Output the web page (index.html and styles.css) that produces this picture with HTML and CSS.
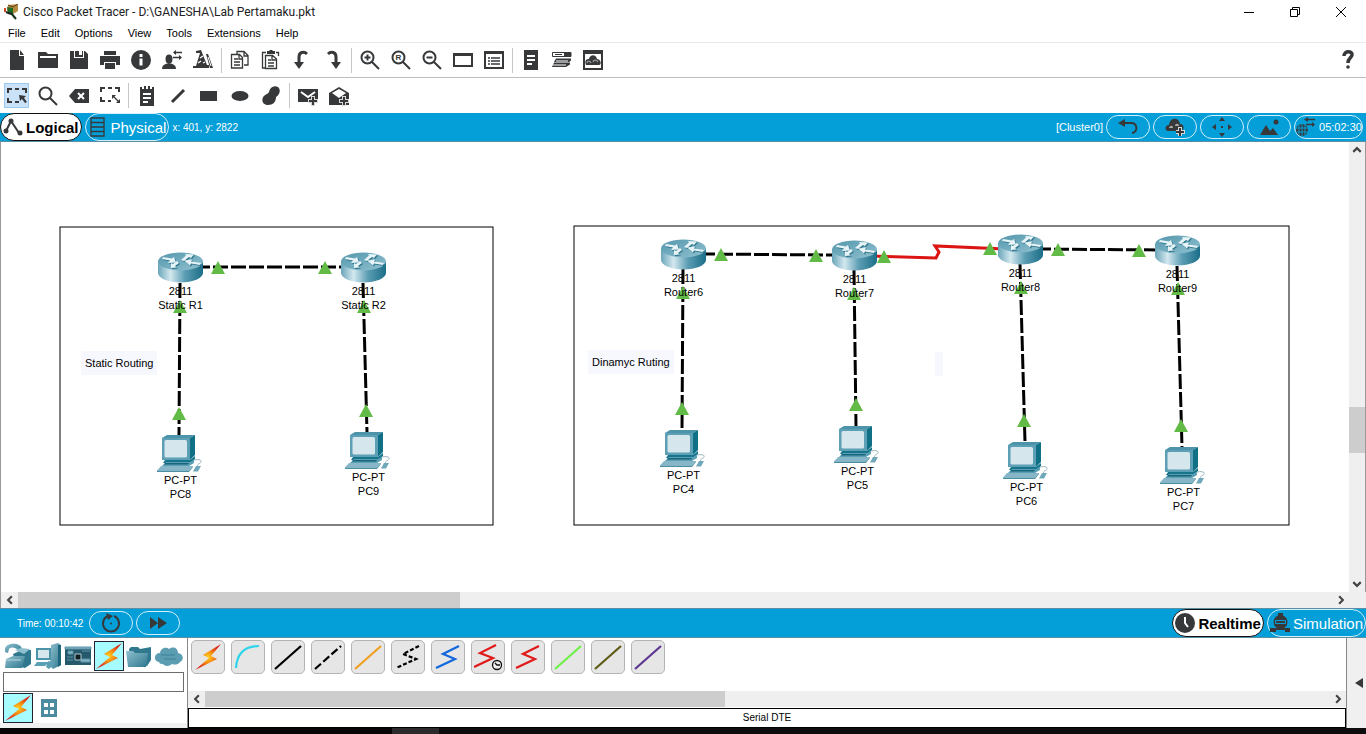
FILE: index.html
```html
<!DOCTYPE html>
<html lang="en">
<head>
    <meta charset="UTF-8">
    <meta name="viewport" content="width=device-width, initial-scale=1.0">
    <title>Cisco Packet Tracer</title>
    <link rel="stylesheet" href="styles.css">
</head>
<body>
    <!-- shared drawings -->
    <svg class="defs" aria-hidden="true">
        <defs>
            <linearGradient id="router-side">
                <stop offset="0" stop-color="#6aa5b9"/>
                <stop offset=".28" stop-color="#d3e8ef"/>
                <stop offset=".6" stop-color="#5b9db3"/>
                <stop offset="1" stop-color="#1b6e88"/>
            </linearGradient>
            <linearGradient id="router-top" x2="1" y2="1">
                <stop offset="0" stop-color="#5597ad"/>
                <stop offset="1" stop-color="#8fc1d0"/>
            </linearGradient>
            <radialGradient id="bolt-fill">
                <stop offset="0" stop-color="#ffd21c"/>
                <stop offset=".45" stop-color="#f58a12"/>
                <stop offset="1" stop-color="#d81f16"/>
            </radialGradient>
            <linearGradient id="teal" x2="1" y2="1">
                <stop offset="0" stop-color="#8fc0cf"/>
                <stop offset="1" stop-color="#2f788e"/>
            </linearGradient>
            <g id="router-arrows">
                <path d="M5 5l9 1.500 2-1.500 2 5.500-8 .500 2-2.500-8-1.500z"/>
                <path d="M23 8l5-4.500-1-1.500 9 .500-3 3.500-2-1-5 4z"/>
                <path d="M21 11l-4 3 2 1.500-6 .500v-5l2 1 4-3z"/>
                <path d="M42 13l-9-1.500-1 2-6-5 8-1-1 2 10 1.500z"/>
            </g>
            <symbol id="router" viewBox="0 0 45 31">
                <path d="M0 9v12c0 5 10 9.500 22.500 9.500S45 26 45 21V9z" fill="url(#router-side)"/>
                <ellipse cx="22.500" cy="9.500" rx="22.500" ry="9" fill="url(#router-top)"/>
                <use href="#router-arrows" x="1" y="1" fill="#2d7389"/>
                <use href="#router-arrows" fill="#e6f3f7"/>
            </symbol>
            <symbol id="pc" viewBox="0 0 45 37">
                <path d="M5 3l5-3h28l-5 3z" fill="#4d94aa"/>
                <path d="M33 3l5-3v20l-5 5z" fill="#0f7086"/>
                <path d="M5 3h28v22H5z" fill="#5d9fb4"/>
                <rect x="7.500" y="5" width="22.500" height="17.500" rx="1.500" fill="#d5e6ed"/>
                <path d="M8 25h25l5-4v3l-5 4H6z" fill="#16748b"/>
                <path d="M9 27h24l4-2v3l-5 3H5z" fill="#5b9fb5"/>
                <path d="M8 28h24l-1 1.500H7z" fill="#17657b"/>
                <path d="M4 31h32l-4 4.500H0z" fill="#86b6c8"/>
                <path d="M0 35.500h32l4-4.500v1l-4 5H0z" fill="#4b8fa6"/>
                <path d="M37 25c5-1 8 0 7 2s-5 2-3 5" fill="none" stroke="#9ab3bd"/>
                <path d="M39 31h5l-3 5.500h-5z" fill="#6fa7bb"/>
            </symbol>
            <symbol id="bolt" viewBox="0 0 28 28">
                <path d="M27 1L9 12l6 3L1 27l22-11-6-3z" fill="url(#bolt-fill)"/>
            </symbol>
            <symbol id="chevron" viewBox="0 0 8 8">
                <path d="M5.500 1L2.500 4l3 3" fill="none" stroke="#444" stroke-width="1.700"/>
            </symbol>
        </defs>
    </svg>

    <div class="titlebar">
        <svg class="app-icon" viewBox="0 0 16 16">
            <path d="M5 1l10-1v7l-5 3-6-3z" fill="#b58a3f"/>
            <path d="M5 1l5 2 5-3" fill="none" stroke="#5c4218"/>
            <path d="M4 3l6 1v6L5 9z" fill="#1c6b25"/>
            <path d="M1 4h2v4H1z" fill="#d04a28"/>
            <path d="M8 9l5 6" stroke="#14301a" stroke-width="2"/>
            <path d="M3 8l5 2" stroke="#222" stroke-width="2"/>
        </svg>
        <span class="title">Cisco Packet Tracer - D:\GANESHA\Lab Pertamaku.pkt</span>
        <div class="window-buttons">
            <button aria-label="Minimize"><svg viewBox="0 0 12 12"><path d="M1 6.500h10"/></svg></button>
            <button aria-label="Restore"><svg viewBox="0 0 12 12"><path d="M1.500 3.500h7v7h-7zM3.500 3.500v-2h7v7h-2"/></svg></button>
            <button aria-label="Close"><svg viewBox="0 0 12 12"><path d="M1 1l10 10M11 1L1 11"/></svg></button>
        </div>
    </div>

    <div class="menubar">
        <a href="#">File</a>
        <a href="#">Edit</a>
        <a href="#">Options</a>
        <a href="#">View</a>
        <a href="#">Tools</a>
        <a href="#">Extensions</a>
        <a href="#">Help</a>
    </div>

    <div class="toolbar main-toolbar">
        <button class="tool" aria-label="New"><svg viewBox="0 0 20 20"><path d="M3 0h9v6h5v14H3zM13 0l4 5h-4z"/></svg></button>
        <button class="tool" aria-label="Open"><svg viewBox="0 0 20 20"><path d="M0 2h8l2 2h10v14H0z"/><path d="M2 7h16" class="light"/></svg></button>
        <button class="tool" aria-label="Save"><svg viewBox="0 0 20 20"><path d="M1 1h4v7h10V1h1l3 3v15H1zM6 1h4v4h3V1h1v6H6z"/></svg></button>
        <button class="tool" aria-label="Print"><svg viewBox="0 0 20 20"><path d="M4 1h12v4H4zM0 6h20v9h-4v-3H4v3H0zM5 13h10v6H5z"/></svg></button>
        <button class="tool" aria-label="Information"><svg viewBox="0 0 20 20"><circle cx="10" cy="10" r="10"/><path d="M10 4v3M10 8.500v7" class="light thick"/></svg></button>
        <button class="tool" aria-label="User profile"><svg viewBox="0 0 20 20"><ellipse cx="7" cy="9" rx="3.500" ry="4.500"/><path d="M0 19c0-4 3-5 7-6 4 1 7 2 7 6z"/><path d="M12 2.500h8M11 7.500h8" class="line thin"/><path d="M14 0v5l-3-2.500zM17 5v5l3-2.500z"/></svg></button>
        <button class="tool" aria-label="Activity wizard"><svg viewBox="0 0 20 20"><path d="M8 0l6 15h2v3H0v-2h3L7 3H3V1z"/><path d="M13 4h2l5 14h-3z"/><path d="M7 8l3-2M5 13l3-2M10 13l2-1" class="light thin"/><path d="M15 7l3 9" class="light hair"/></svg></button>
        <span class="sep"></span>
        <button class="tool" aria-label="Copy"><svg viewBox="0 0 20 20"><path d="M7 4V1.500h7l4 4V15h-4M14 1.500V6h4M1.500 4.500h8l3 3V18h-11zM9 5v4h4M4 9h4M4 12h6M4 15h6" class="line thin"/></svg></button>
        <button class="tool" aria-label="Paste"><svg viewBox="0 0 20 20"><path d="M5 2.500H1.500V18H4M15 2.500h2.500V6M4.500 5.500h7l4 3.500v9.500h-11zM11 6v4h4M7 10h3M7 13h6M7 16h6" class="line thin"/><path d="M6 1h2l1-1h2l1 1h2v3H6z"/></svg></button>
        <button class="tool" aria-label="Undo"><svg viewBox="0 0 20 20"><path d="M7 14V7c0-5 5-6 8-3" class="line thick"/><path d="M2 12h10l-5 7z"/></svg></button>
        <button class="tool" aria-label="Redo"><svg viewBox="0 0 20 20"><path d="M13 14V7c0-5-5-6-8-3" class="line thick"/><path d="M8 12h10l-5 7z"/></svg></button>
        <span class="sep"></span>
        <button class="tool" aria-label="Zoom in"><svg viewBox="0 0 20 20"><circle cx="7.500" cy="7.500" r="6" class="line"/><path d="M12 12l7 7M4.500 7.500h6M7.500 4.500v6" class="line"/></svg></button>
        <button class="tool" aria-label="Zoom reset"><svg viewBox="0 0 20 20"><circle cx="7.500" cy="7.500" r="6" class="line"/><path d="M12 12l7 7" class="line"/><text x="7.500" y="10" text-anchor="middle">R</text></svg></button>
        <button class="tool" aria-label="Zoom out"><svg viewBox="0 0 20 20"><circle cx="7.500" cy="7.500" r="6" class="line"/><path d="M12 12l7 7M4.500 7.500h6" class="line"/></svg></button>
        <button class="tool" aria-label="Drawing palette"><svg viewBox="0 0 20 20"><path d="M1 4v12h18V4z" class="line"/><path d="M0 3h20v3H0z"/></svg></button>
        <button class="tool" aria-label="Custom devices dialog"><svg viewBox="0 0 20 20"><path d="M1 2v16h18V2z" class="line"/><path d="M0 1h20v3H0z"/><path d="M4 8h2M7 8h9M4 11h2M7 11h9M4 14h2M7 14h9" class="line thin"/></svg></button>
        <span class="sep"></span>
        <button class="tool" aria-label="Cluster"><svg viewBox="0 0 20 20"><path d="M3 0h14v20H3z"/><path d="M6 6h8M6 10h8M6 14h5" class="light"/></svg></button>
        <button class="tool" aria-label="Network devices"><svg viewBox="0 0 20 20"><path d="M.5 2.500h18.500v4H.5z" class="line hair"/><path d="M12 3h7v3h-7zM3 4h7v1H3zM4 8.500h15v2L17 12H2zM2 12.500h16v2L14 17H0z"/><path d="M1 15h13M4 11h12" class="light hair"/></svg></button>
        <button class="tool" aria-label="Workspace background"><svg viewBox="0 0 20 20"><path d="M1 1h18v18H1z" class="line"/><path d="M0 0h20v4H0z"/><path d="M3 15c-2-5 1-6 3-6 1-5 7-5 8 0 4 0 5 6 2 6z"/><path d="M4 13c1-3 3-2 4 0M10 12c1-3 4-2 5 0" class="grey-line thin"/></svg></button>
        <button class="tool help" aria-label="Help"><svg viewBox="0 0 20 20"><path d="M6 6c0-6 9-5 8-1-.500 3-4 3-4 8" class="line question"/><circle cx="10" cy="17" r="1.800"/></svg></button>
    </div>

    <div class="toolbar">
        <button class="tool selected" aria-label="Select"><svg viewBox="0 0 20 20"><path d="M1 7V3h4M8 3h4M15 3h4v4M1 12v4h4M8 16h4" class="line"/><path d="M12 9l7 1-2 2 3 4-2 1-3-4-2 2z"/></svg></button>
        <button class="tool" aria-label="Inspect"><svg viewBox="0 0 20 20"><circle cx="7.500" cy="7.500" r="6" class="line"/><path d="M12 12l7 7" class="line"/></svg></button>
        <button class="tool" aria-label="Delete"><svg viewBox="0 0 20 20"><path d="M0 10l6-7h14v14H6z"/><path d="M9 7l6 6M15 7l-6 6" class="light"/></svg></button>
        <button class="tool" aria-label="Resize shape"><svg viewBox="0 0 20 20"><path d="M1 6V2h4M8 2h4M15 2h4v4M1 11v4h4M8 15h3" class="line"/><path d="M13 10l6 6" class="line thin"/><path d="M12 9h4l-4 4zM20 17v-4l-4 4z"/></svg></button>
        <span class="sep"></span>
        <button class="tool" aria-label="Place note"><svg viewBox="0 0 20 20"><path d="M3 1h2v2h2V0h2v3h2V0h2v3h2V1h2v19H3z"/><path d="M6 8h8M6 12h8M6 16h5" class="light"/></svg></button>
        <button class="tool" aria-label="Draw line"><svg viewBox="0 0 20 20"><path d="M4 16L16 4" class="line thick"/></svg></button>
        <button class="tool" aria-label="Draw rectangle"><svg viewBox="0 0 20 20"><path d="M1 5h17v10H1z"/></svg></button>
        <button class="tool" aria-label="Draw ellipse"><svg viewBox="0 0 20 20"><ellipse cx="10" cy="10" rx="8.500" ry="5"/></svg></button>
        <button class="tool" aria-label="Draw freeform"><svg viewBox="0 0 20 20"><path d="M8 6c1-5 5-7 9-5 3 3 2 7-2 10 0 5-3 8-8 8-6 0-7-6-4-9 2-2 4-2 5-4z"/></svg></button>
        <span class="sep"></span>
        <button class="tool" aria-label="Add simple PDU"><svg viewBox="0 0 20 20"><path d="M0 3h20v13H0z"/><path d="M3 6l7 5 7-5" class="light"/><path d="M15 10v10M10 15h10" class="plus-back"/><path d="M15 11v8M11 15h8" class="line"/></svg></button>
        <button class="tool" aria-label="Add complex PDU"><svg viewBox="0 0 20 20"><path d="M0 7l10-6 10 6v12H0z"/><path d="M3 7l7-4 7 4-7 5z" fill="#fff"/><path d="M15 10v10M10 15h10" class="plus-back"/><path d="M15 11v8M11 15h8" class="line"/></svg></button>
    </div>

    <div class="bluebar">
        <button class="mode active"><svg viewBox="0 0 20 20"><path d="M3 14l5-10 8 12" class="line"/><circle cx="3" cy="14" r="2.500"/><circle cx="8" cy="4" r="2.500"/><circle cx="17" cy="16" r="2.500"/></svg>Logical</button>
        <button class="mode"><svg viewBox="0 0 20 20"><path d="M3 1h13v18H3zM3 5.500h13M3 10h13M3 14.500h13" class="line thin"/></svg>Physical</button>
        <span class="coords">x: 401, y: 2822</span>
        <div class="right">
            <span class="cluster">[Cluster0]</span>
            <button class="pill" aria-label="Back"><svg viewBox="0 0 20 20"><path d="M5 6h8c7 0 7 9 1 10" class="line"/><path d="M0 6l7-4v8z"/></svg></button>
            <button class="pill" aria-label="New cluster"><svg viewBox="0 0 20 20"><path d="M3 14c-4-1-3-6 1-6 1-8 10-8 11-1 5 0 4 7 1 7z"/><path d="M4 11c1-3 4-3 4 0zM10 9c0-3 4-3 4 0z" fill="#a9a9a9"/><path d="M15 10v9M11 15h9" class="plus-back"/><path d="M15 11v8M11 15h8" class="line"/></svg></button>
            <button class="pill" aria-label="Move object"><svg viewBox="0 0 20 20"><path d="M10 0l3 4H7zM10 20l3-4H7zM0 10l4-3v6zM20 10l-4-3v6zM9 9h2v2H9z"/></svg></button>
            <button class="pill" aria-label="Set background"><svg viewBox="0 0 20 20"><path d="M1 18L7 8l4 6 3-3 5 7z"/><circle cx="17" cy="5" r="2.500"/></svg></button>
            <button class="pill clock"><svg viewBox="0 0 20 20"><circle cx="7" cy="13" r="6"/><path d="M1 11h12M1 15h12M7 7v12M4 8v10M10 8v10" class="blue-line"/><path d="M12 2.500h8M11 7.500h8" class="line thin"/><path d="M13 0v5l-4-2.500zM17 5v5l3-2.500z"/></svg>05:02:30</button>
        </div>
    </div>

    <div class="workspace">
        <div class="canvas">
            <svg class="cables" width="1348" height="449">
                <defs>
                    <path id="up" d="M0 0l7 13H-7z"/>
                </defs>
                <g class="frame">
                    <rect x="60" y="85" width="433" height="298"/>
                    <rect x="574" y="84" width="715" height="299"/>
                </g>
                <g class="crossover">
                    <path d="M195 125H348"/>
                    <path d="M180 141L179 293"/>
                    <path d="M363 141L367 290"/>
                    <path d="M700 112L838 113"/>
                    <path d="M683 127L682 288"/>
                    <path d="M854 128L856 284"/>
                    <path d="M1036 107L1162 108"/>
                    <path d="M1020 122L1025 300"/>
                    <path d="M1177 124L1182 305"/>
                </g>
                <path class="serial" d="M870 114L936 116L939 110L935 104L1005 107"/>
                <g class="link-up">
                    <use href="#up" x="218" y="119"/>
                    <use href="#up" x="325" y="119"/>
                    <use href="#up" x="180" y="158"/>
                    <use href="#up" x="364" y="158"/>
                    <use href="#up" x="179" y="265"/>
                    <use href="#up" x="366" y="262"/>
                    <use href="#up" x="721" y="106"/>
                    <use href="#up" x="816" y="107"/>
                    <use href="#up" x="884" y="108"/>
                    <use href="#up" x="683" y="144"/>
                    <use href="#up" x="854" y="145"/>
                    <use href="#up" x="990" y="100"/>
                    <use href="#up" x="1058" y="101"/>
                    <use href="#up" x="1139" y="102"/>
                    <use href="#up" x="1021" y="139"/>
                    <use href="#up" x="1178" y="140"/>
                    <use href="#up" x="682" y="260"/>
                    <use href="#up" x="856" y="256"/>
                    <use href="#up" x="1024" y="272"/>
                    <use href="#up" x="1181" y="277"/>
                </g>
            </svg>

            <div class="node router static-r1"><svg><use href="#router"/></svg><span>2811</span><span>Static R1</span></div>
            <div class="node router static-r2"><svg><use href="#router"/></svg><span>2811</span><span>Static R2</span></div>
            <div class="node router router6"><svg><use href="#router"/></svg><span>2811</span><span>Router6</span></div>
            <div class="node router router7"><svg><use href="#router"/></svg><span>2811</span><span>Router7</span></div>
            <div class="node router router8"><svg><use href="#router"/></svg><span>2811</span><span>Router8</span></div>
            <div class="node router router9"><svg><use href="#router"/></svg><span>2811</span><span>Router9</span></div>

            <div class="node pc pc8"><svg><use href="#pc"/></svg><span>PC-PT</span><span>PC8</span></div>
            <div class="node pc pc9"><svg><use href="#pc"/></svg><span>PC-PT</span><span>PC9</span></div>
            <div class="node pc pc4"><svg><use href="#pc"/></svg><span>PC-PT</span><span>PC4</span></div>
            <div class="node pc pc5"><svg><use href="#pc"/></svg><span>PC-PT</span><span>PC5</span></div>
            <div class="node pc pc6"><svg><use href="#pc"/></svg><span>PC-PT</span><span>PC6</span></div>
            <div class="node pc pc7"><svg><use href="#pc"/></svg><span>PC-PT</span><span>PC7</span></div>

            <div class="note note-static">Static Routing</div>
            <div class="note note-dynamic">Dinamyc Ruting</div>
            <div class="note note-empty"></div>
        </div>
        <div class="scroll-v">
            <button aria-label="Scroll up"><svg class="up"><use href="#chevron"/></svg></button>
            <div class="track"><div class="thumb"></div></div>
            <button aria-label="Scroll down"><svg class="down"><use href="#chevron"/></svg></button>
        </div>
        <div class="scroll-h">
            <button aria-label="Scroll left"><svg><use href="#chevron"/></svg></button>
            <div class="track canvas-track"><div class="thumb"></div></div>
            <button aria-label="Scroll right"><svg class="flip"><use href="#chevron"/></svg></button>
        </div>
    </div>

    <div class="bluebar timebar">
        <span class="time">Time: 00:10:42</span>
        <button class="pill" aria-label="Power cycle devices"><svg viewBox="0 0 20 20"><path d="M7 3a8 8 0 1 0 6 0" class="line"/><path d="M5 0l7 3-5 4z"/><circle cx="10" cy="10.500" r="1"/></svg></button>
        <button class="pill" aria-label="Fast forward"><svg viewBox="0 0 20 20"><path d="M2 4l8 6-8 6zM10 4l9 6-9 6z"/></svg></button>
        <div class="right">
            <button class="mode active"><svg viewBox="0 0 20 20"><circle cx="10" cy="10" r="10"/><path d="M10 4v6l3 4" class="light"/></svg>Realtime</button>
            <button class="mode"><svg viewBox="0 0 20 20"><path d="M8 0h5v3H8zM0 15h20v4h-5v-2H6v2H0z"/><circle cx="10.500" cy="9" r="7"/><path d="M5.500 7.500h10v3h-10z" class="blue-line"/></svg>Simulation</button>
        </div>
    </div>

    <div class="bottom">
        <div class="devices">
            <div class="categories">
                <button class="cat" aria-label="Network devices"><svg viewBox="0 0 28 28"><path d="M9 12l9-4h9v14l-6 4-8-2z" fill="#2f788e"/><path d="M1 7c1-7 16-7 17 0l-3 4-2-4c-3-2-6-2-8 0l-1 4-3-1z" fill="url(#teal)"/><path d="M2 17l7-3h12l-3 12H1z" fill="url(#teal)"/><path d="M11 8l6-2 9 1-6 5z" fill="#8fc0cf"/><path d="M2 18h15" stroke="#b9d9e3"/></svg></button>
                <button class="cat" aria-label="End devices"><svg viewBox="0 0 28 28"><path d="M17 3l7-2 3 2v20l-8 4-3-3z" fill="url(#teal)"/><path d="M24 3h3v20l-3 2z" fill="#1d667c"/><path d="M2 6h15v12H2z" fill="#4b93a9"/><path d="M4 8h11v8H4z" fill="#d5e6ed"/><path d="M3 20h12l-4 4H0zM14 19l7 2-6 6-3-2z" fill="#5b9fb5"/></svg></button>
                <button class="cat" aria-label="Components"><svg viewBox="0 0 28 28"><path d="M1 5h26v18H1z" fill="#26596b"/><path d="M1 5h26v2H1zM4 9h5v3H4zM18 9h8M3 15h6M3 18h6M17 17h9v3h-9z" fill="#7fb2c2" stroke="#5d95a8"/><path d="M11 12h6v6h-6z" fill="#101e24" stroke="#a9cdd8"/></svg></button>
                <button class="cat on" aria-label="Connections"><svg><use href="#bolt"/></svg></button>
                <button class="cat" aria-label="Miscellaneous"><svg viewBox="0 0 28 28"><path d="M4 7l2-2h7l2 2 11-2v13l-4 6H6z" fill="#2f788e"/><path d="M1 9h7l2 2h13l-2 14H3z" fill="url(#teal)"/></svg></button>
                <button class="cat" aria-label="Multiuser connection"><svg viewBox="0 0 28 28"><path d="M4 20c-6-1-5-9 1-9 1-6 7-6 9-4 4-3 9-1 9 4 6 1 6 7 2 9-2 3-6 3-8 2-3 3-8 2-9 0-2 0-3 0-4-2z" fill="#5d9db1"/><path d="M6 13h14M9 17h12" stroke="#3d8299" fill="none"/></svg></button>
            </div>
            <input class="search" type="text" aria-label="Search devices">
            <div class="categories">
                <button class="cat on" aria-label="Connections"><svg><use href="#bolt"/></svg></button>
                <button class="cat" aria-label="Structured cabling"><svg viewBox="0 0 28 28"><path d="M6 5h16v18H6z" fill="#4c8ba0"/><path d="M9 9h4v4H9zM15 9h4v4h-4zM9 16h4v4H9zM15 16h4v4h-4z" fill="#fff"/></svg></button>
            </div>
        </div>
        <div class="panel">
            <div class="connections">
                <button aria-label="Automatic"><svg><use href="#bolt"/></svg></button>
                <button aria-label="Console"><svg viewBox="0 0 28 28"><path d="M2 25C3 9 12 3 25 3" stroke="#2ed5ea"/></svg></button>
                <button aria-label="Copper straight-through"><svg viewBox="0 0 28 28"><path d="M1 26L27 3" stroke="#000"/></svg></button>
                <button aria-label="Copper cross-over"><svg viewBox="0 0 28 28"><path d="M1 26L27 3" stroke="#000" stroke-dasharray="8 3"/></svg></button>
                <button aria-label="Fiber"><svg viewBox="0 0 28 28"><path d="M1 26L27 3" stroke="#efa020"/></svg></button>
                <button aria-label="Phone"><svg viewBox="0 0 28 28"><path d="M25 3L9 11l13 5L2 25" stroke="#000" stroke-dasharray="4 2"/></svg></button>
                <button aria-label="Coaxial"><svg viewBox="0 0 28 28"><path d="M25 3L9 11l12 5L2 25" stroke="#1268dc"/></svg></button>
                <button aria-label="Serial DCE"><svg viewBox="0 0 28 28"><path d="M22 2L6 10l13 5L0 24" stroke="#e01a1a"/><circle cx="23" cy="22" r="4.500" stroke="#111" stroke-width="1.300" fill="#eee"/><path d="M21 20l2 2h3" stroke="#111" stroke-width="1.300"/></svg></button>
                <button aria-label="Serial DTE"><svg viewBox="0 0 28 28"><path d="M25 3L9 11l12 5L2 25" stroke="#e01a1a"/></svg></button>
                <button aria-label="Octal"><svg viewBox="0 0 28 28"><path d="M1 26L27 3" stroke="#6df047"/></svg></button>
                <button aria-label="IoT custom cable"><svg viewBox="0 0 28 28"><path d="M1 26L27 3" stroke="#5d5a14"/></svg></button>
                <button aria-label="USB"><svg viewBox="0 0 28 28"><path d="M1 26L27 3" stroke="#5c3690"/></svg></button>
            </div>
            <div class="scroll-h">
                <button aria-label="Scroll left"><svg><use href="#chevron"/></svg></button>
                <div class="track panel-track"><div class="thumb"></div></div>
                <button aria-label="Scroll right"><svg class="flip"><use href="#chevron"/></svg></button>
            </div>
            <div class="status">Serial DTE</div>
        </div>
        <button class="expander" aria-label="Show event list"><svg viewBox="0 0 8 10"><path d="M8 0v10L0 5z"/></svg></button>
    </div>
    <div class="taskbar"></div>
</body>
</html>
```
FILE: styles.css
```css
* {
    box-sizing: border-box;
}
body {
    margin: 0;
    min-height: 100vh;
    display: flex;
    flex-direction: column;
    background: #fff;
    color: #000;
    font-family: "Liberation Sans", Arial, sans-serif;
    font-size: 11px;
    overflow: hidden;
}
button {
    display: flex;
    align-items: center;
    justify-content: center;
    padding: 0;
    border: 0;
    background: none;
    color: inherit;
    font: inherit;
}
svg {
    display: block;
    flex: none;
    fill: #37383a;
}
.defs {
    position: absolute;
    width: 0;
    height: 0;
}
/* lets each use of a shared drawing pick its own colour */
#router-arrows, #router-arrows path {
    fill: inherit;
}

/* icon strokes */
.line, .light, .blue-line, .grey-line, .plus-back {
    fill: none;
    stroke: #37383a;
    stroke-width: 2;
}
.light {
    stroke: #fff;
}
.blue-line {
    stroke: #049fd9;
    stroke-width: 1;
}
.grey-line {
    stroke: #9a9a9a;
}
.plus-back {
    stroke: #d8d8d8;
    stroke-width: 4;
}
.thin {
    stroke-width: 1.3;
}
.hair {
    stroke-width: 1;
}
.thick {
    stroke-width: 3;
}
.question {
    stroke-width: 3.5;
}

/* title and menu */
.titlebar {
    display: flex;
    align-items: center;
    height: 23px;
    padding-left: 3px;
}
.app-icon {
    width: 16px;
    height: 16px;
}
.title {
    margin-left: 4px;
    font-family: Roboto, "Open Sans", sans-serif;
    font-size: 12px;
    line-height: 22px;
    color: #222;
}
.window-buttons {
    display: flex;
    margin-left: auto;
    padding-right: 2px;
}
.window-buttons button {
    width: 46px;
    height: 22px;
}
.window-buttons svg {
    width: 12px;
    height: 12px;
    fill: none;
    stroke: #000;
}
.menubar {
    display: flex;
    align-items: center;
    gap: 15px;
    height: 20px;
    padding-left: 8px;
    border-bottom: 1px solid #ebebeb;
}
.menubar a {
    color: #000;
    text-decoration: none;
}

/* toolbars */
.toolbar {
    display: flex;
    align-items: center;
    height: 35px;
    padding: 0 3px 0 1px;
}
.main-toolbar {
    border-bottom: 1px solid #bdbdbd;
}
.tool {
    width: 25px;
    height: 25px;
    margin: 0 3px;
}
.tool svg {
    width: 20px;
    height: 20px;
}
.tool text {
    font-size: 8px;
    font-weight: bold;
}
.selected {
    background: #c9e2f7;
    border: 1px solid #9cc9ef;
}
.sep {
    width: 1px;
    height: 25px;
    margin: 0 2px 0 3px;
    background: #c6c6c6;
}
.help {
    margin-left: auto;
}

/* blue bars */
.bluebar {
    display: flex;
    align-items: center;
    gap: 3px;
    height: 29px;
    background: #049fd9;
    border-bottom: 1px solid #5c8ea4;
    color: #fff;
}
.right {
    display: flex;
    align-items: center;
    gap: 3px;
    margin-left: auto;
}
.mode {
    gap: 3px;
    height: 28px;
    padding: 0 2px;
    border: 1px solid #d3effa;
    border-radius: 14px;
    font-size: 15px;
}
.mode svg {
    width: 20px;
    height: 20px;
}
.active {
    background: #fff;
    border-color: #111;
    color: #000;
    font-weight: bold;
}
.coords, .time {
    font-size: 10px;
}
.pill {
    width: 44px;
    height: 24px;
    border: 1px solid #d3effa;
    border-radius: 12px;
}
.pill svg {
    width: 20px;
    height: 20px;
}
.clock {
    width: 69px;
    gap: 4px;
    margin-right: 3px;
}
.timebar {
    height: 30px;
    border-top: 1px solid #5c8ea4;
}
.time {
    padding-left: 17px;
    margin-right: 3px;
}

/* workspace */
.workspace {
    flex: 1;
    display: grid;
    grid-template-columns: 1fr 17px;
    grid-template-rows: 1fr 16px;
    border-left: 1px solid #999;
    background: #efefef;
}
.canvas {
    position: relative;
    overflow: hidden;
    margin-left: -1px;
    border-left: 1px solid #999;
    background: #fff;
}
.cables {
    position: absolute;
    top: 0;
    left: -1px;
}
.frame {
    fill: none;
    stroke: #000;
}
.crossover {
    fill: none;
    stroke: #000;
    stroke-width: 3;
    stroke-dasharray: 15 3;
}
.serial {
    fill: none;
    stroke: #dc1414;
    stroke-width: 3;
}
.link-up {
    fill: #62bb46;
}
.node {
    position: absolute;
    display: flex;
    flex-direction: column;
    align-items: center;
    width: 45px;
    line-height: 14px;
    white-space: nowrap;
}
.node svg {
    width: 45px;
    height: 37px;
    margin-bottom: 1px;
}
.router svg {
    height: 31px;
}
.pc {
    width: 47px;
}
.pc svg {
    align-self: flex-start;
}
.static-r1 { left: 157px; top: 110px; }
.static-r2 { left: 340px; top: 110px; }
.router6 { left: 660px; top: 97px; }
.router7 { left: 831px; top: 98px; }
.router8 { left: 997px; top: 92px; }
.router9 { left: 1154px; top: 93px; }
.pc8 { left: 156px; top: 293px; }
.pc9 { left: 344px; top: 290px; }
.pc4 { left: 659px; top: 288px; }
.pc5 { left: 833px; top: 284px; }
.pc6 { left: 1002px; top: 300px; }
.pc7 { left: 1159px; top: 305px; }
.note {
    position: absolute;
    min-height: 24px;
    padding: 0 4px;
    background: #f7f8fe;
    line-height: 24px;
}
.note-static { left: 80px; top: 209px; }
.note-dynamic { left: 587px; top: 208px; }
.note-empty { left: 934px; top: 210px; }

/* scrollbars */
.scroll-v, .scroll-h {
    display: flex;
    background: #efefef;
}
.scroll-v {
    flex-direction: column;
    border-right: 1px solid #999;
}
.scroll-h {
    height: 16px;
}
.scroll-v button, .scroll-h button {
    width: 17px;
    height: 16px;
    flex: none;
}
.scroll-v button {
    width: 15px;
}
.scroll-v button svg, .scroll-h button svg {
    width: 10px;
    height: 10px;
}
.flip {
    transform: rotate(180deg);
}
.up {
    transform: rotate(90deg);
}
.down {
    transform: rotate(-90deg);
}
.track {
    flex: 1;
    display: grid;
}
.thumb {
    background: #cdcdcd;
}
.scroll-v .track {
    grid-template-rows: 247fr 45fr 122fr;
}
.scroll-v .thumb {
    grid-row: 2;
}
.canvas-track {
    grid-template-columns: 442fr 871fr;
}
.panel-track {
    grid-template-columns: 520fr 605fr;
}

/* bottom area */
.bottom {
    display: flex;
    background: #f0f0f0;
}
.devices {
    width: 187px;
    padding: 3px 3px 0;
    border-bottom: 5px solid #f0f0f0;
    background: #fff;
}
.categories {
    display: flex;
    gap: 1px;
}
.cat {
    width: 30px;
    height: 30px;
}
.cat svg {
    width: 28px;
    height: 28px;
}
.on {
    border: 1px solid #223;
    background: #a5fbfd;
}
.search {
    display: block;
    width: 181px;
    height: 20px;
    margin: 1px 0;
    border: 1px solid #6d6d6d;
    background: #fff;
}
.panel {
    flex: 1;
    display: flex;
    flex-direction: column;
    border-left: 1px solid #888;
    border-right: 1px solid #888;
    background: #fff;
}
.connections {
    flex: 1;
    display: flex;
    gap: 6px;
    padding: 2px 3px;
}
.connections button {
    width: 34px;
    height: 34px;
    border: 1px solid #b4b4b4;
    border-radius: 5px;
    background: #e6e6e6;
}
.connections svg {
    width: 28px;
    height: 28px;
    fill: none;
    stroke-width: 2.2;
}
.status {
    height: 20px;
    margin-top: 1px;
    border: 1px solid #000;
    line-height: 18px;
    text-align: center;
    font-size: 10px;
}
.expander {
    width: 19px;
}
.expander svg {
    width: 8px;
    height: 10px;
    margin-left: 4px;
}
.taskbar {
    height: 6px;
    background: linear-gradient(90deg, #050505 392px, #2b2b2b 392px, #2b2b2b 439px, #0c0c0c 439px);
}
```
